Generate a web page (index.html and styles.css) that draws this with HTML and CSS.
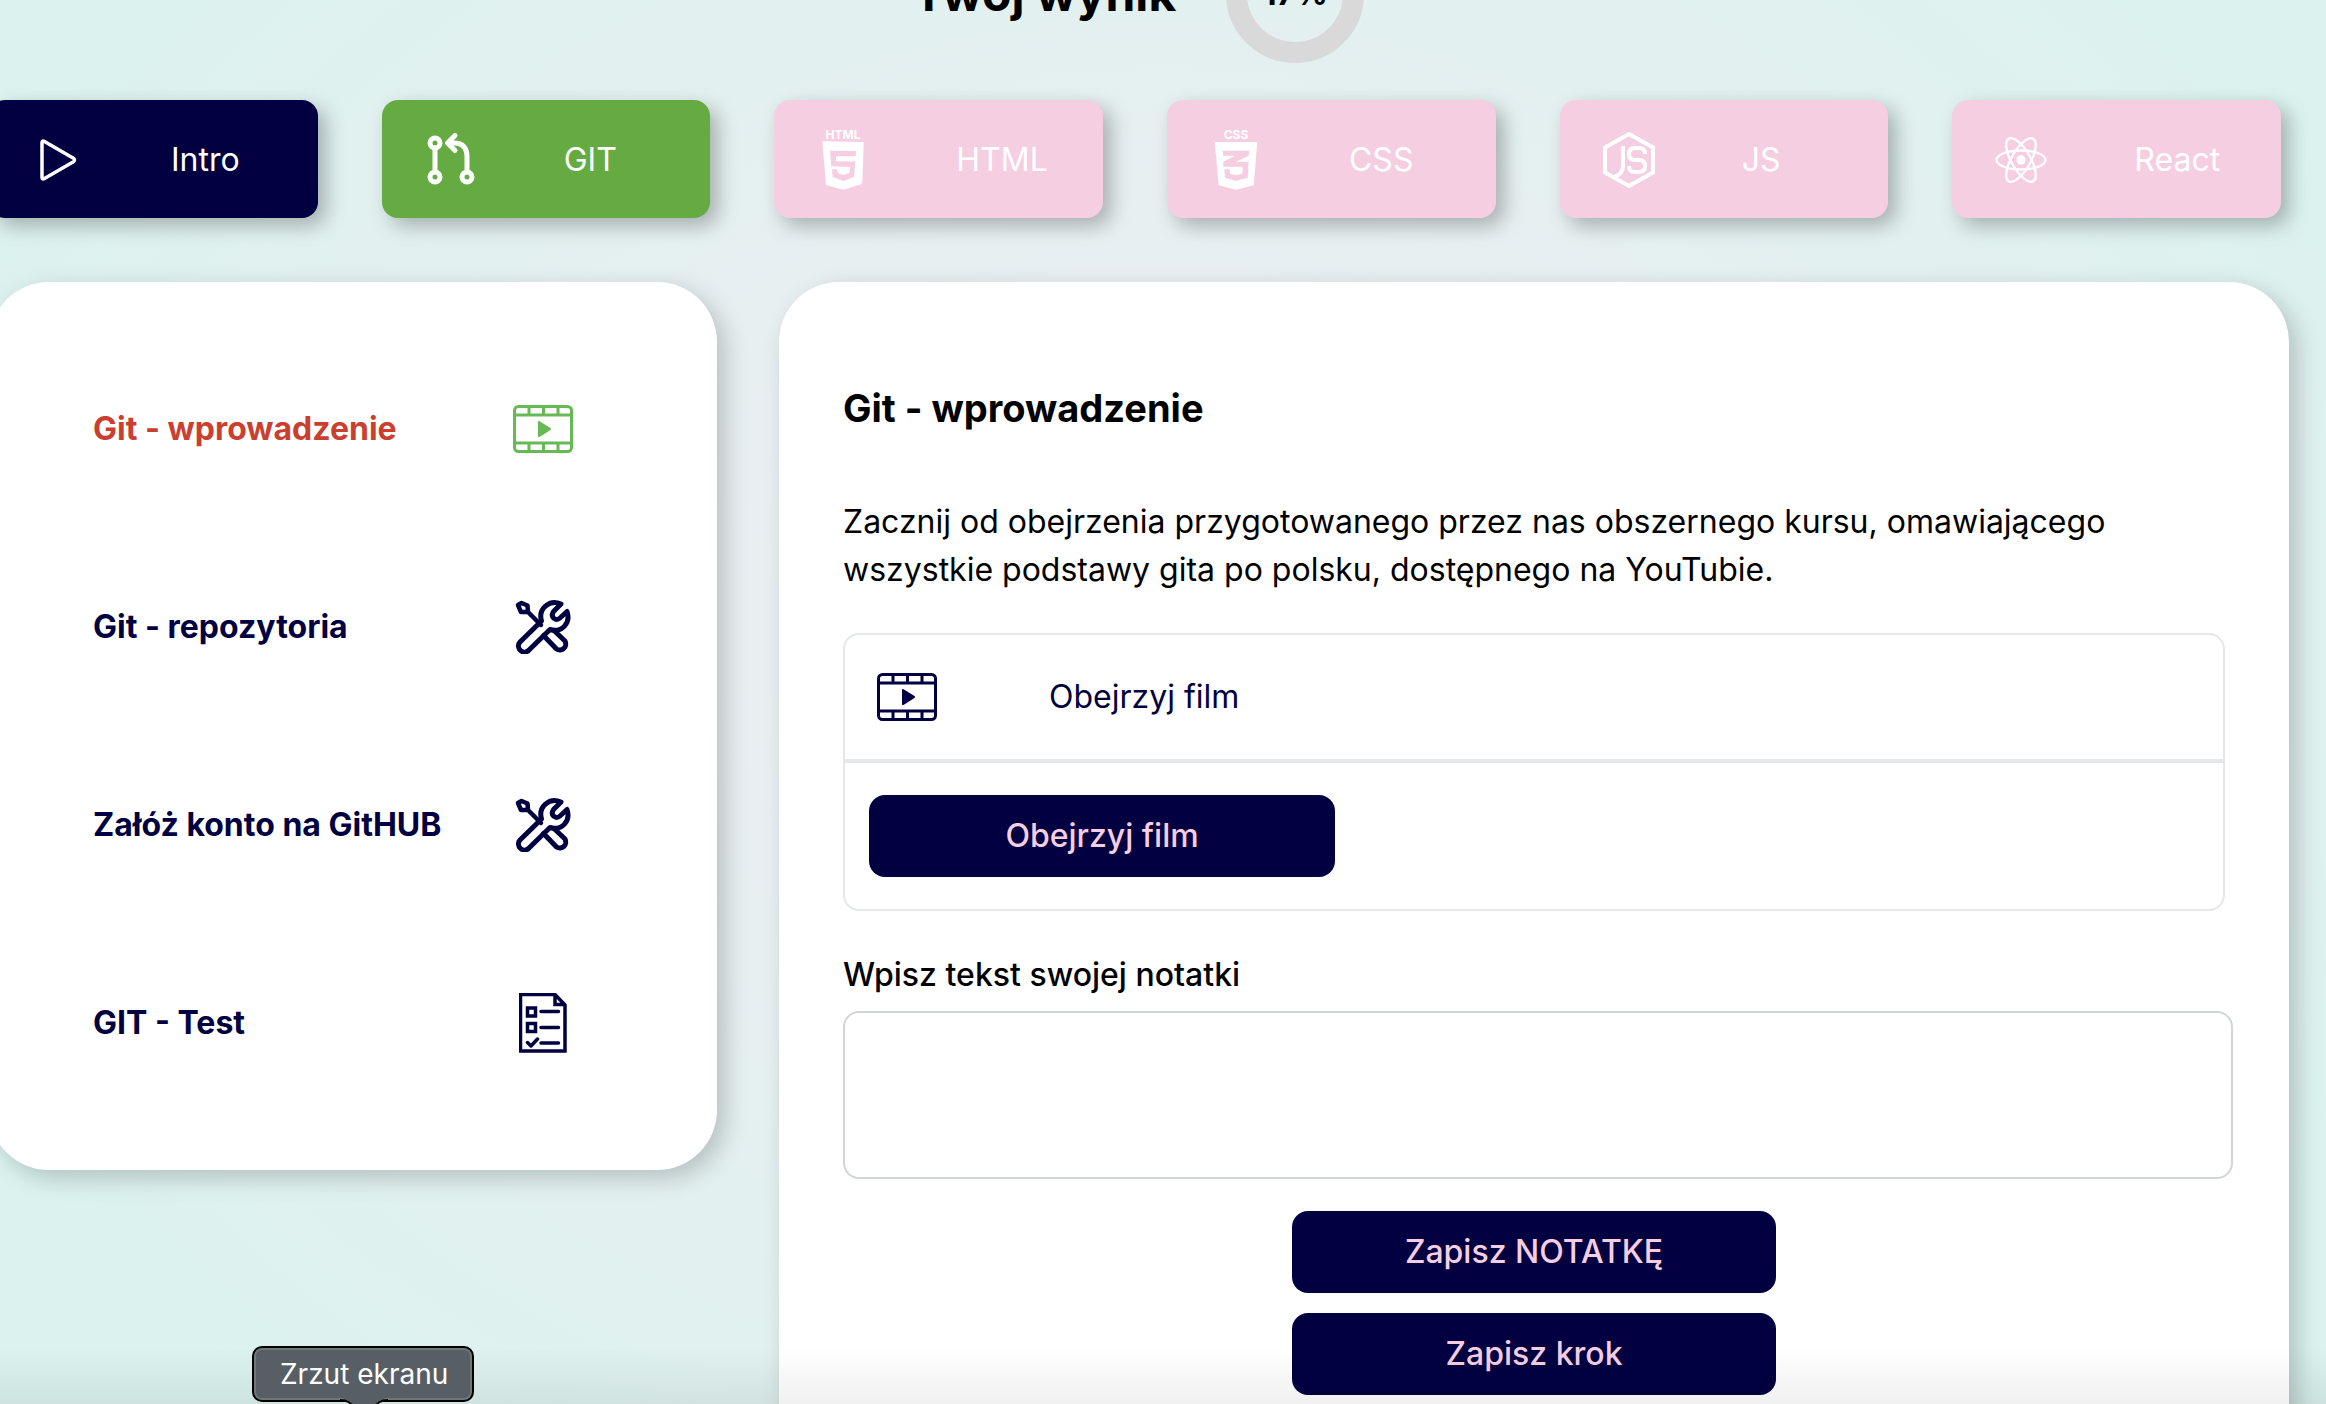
FILE: index.html
```html
<!DOCTYPE html>
<html lang="pl">
<head>
<meta charset="utf-8">
<title>Git - wprowadzenie</title>
<link rel="stylesheet" href="styles.css">
</head>
<body>
<svg class="sprite" aria-hidden="true">
  <symbol id="film" viewBox="0 0 60 48">
    <g fill="none" stroke="currentColor" stroke-width="3">
      <rect x="1.5" y="1.5" width="57" height="45" rx="4"/>
      <path d="M2 10H58M2 38H58M16 2V10M30.500 2V10M45 2V10M16 38V46M30.500 38V46M45 38V46"/>
    </g>
    <path d="M25 17Q25 15.500 26.500 16.200L37.500 23Q38.600 24 37.500 25L26.500 32Q25 32.600 25 31z" fill="currentColor"/>
  </symbol>
  <symbol id="tools" viewBox="0 0 56 54">
    <g fill="none" stroke="currentColor" stroke-width="5" stroke-linejoin="round" stroke-linecap="round">
      <path d="M3 5L6.500 3L12.500 5.500L13 12L6 12zM14 13L26 25" stroke-width="4.500"/>
      <path d="M5 42L26.500 21C23 9 34-1 46 4L38.500 11.500C35 17 40.500 22 45 18L52 11.500C56 23 47 33 35 29.500L14 50A6 6 0 0 1 5 42z"/>
      <path d="M28.500 35.500L41.500 49A6 6 0 0 0 50 41L39.500 31"/>
    </g>
  </symbol>
  <symbol id="checklist" viewBox="0 0 48 60">
    <g fill="none" stroke="currentColor" stroke-width="3.500">
      <path d="M1.500 1.500H36L46 12V58H1.500zM36 2V11.500H46M8.500 15h8v8h-8zM8.500 30.500h8v8h-8z"/>
      <path d="M22 18.500H39.500M22 34.500H39.500M22 50H39.500M8.500 49.500L12 53L18.500 46" stroke-linecap="round" stroke-linejoin="round"/>
    </g>
  </symbol>
</svg>

<div class="page">
  <header class="score">
    <h1 class="score-title">Twój wynik</h1>
    <div class="score-ring">17%</div>
  </header>

  <nav class="tabs">
    <button class="tab tab-dark" type="button">
      <svg class="tab-icon" viewBox="0 0 48 64"><path d="M8 14.500Q8 12 10.500 13.500L39 30Q42 32 39 34L10.500 50.500Q8 52 8 49.500z" fill="none" stroke="#fff" stroke-width="3.500" stroke-linejoin="round"/></svg>
      <span>Intro</span>
    </button>
    <button class="tab tab-green" type="button">
      <svg class="tab-icon" viewBox="0 0 48 64"><g fill="none" stroke="#fff" stroke-width="5" stroke-linecap="round" stroke-linejoin="round"><circle cx="8" cy="15" r="5"/><circle cx="8" cy="49" r="5"/><circle cx="40" cy="49" r="5"/><path d="M8 20V44M40 44V29Q40 15 27 15H21M28 7.500L20.500 15L28 22.500"/></g></svg>
      <span>GIT</span>
    </button>
    <button class="tab" type="button">
      <svg class="tab-icon" viewBox="0 0 48 64"><text class="logo-caption" x="24" y="11" text-anchor="middle">HTML</text><path fill="#fff" fill-rule="evenodd" d="M3.300 13.300L44.700 14L43.500 52Q43.200 55.500 42 56.200L24.300 61.700L7 57zM11 22.700L12.300 38.300L31 39L30.300 45L24.300 47L18.700 45L18 41.300L13 41.300L13.700 49L24.300 53L35 49L36.500 33.500L17 33.300L17 28.300L36.700 28.300L37 23z"/></svg>
      <span>HTML</span>
    </button>
    <button class="tab" type="button">
      <svg class="tab-icon" viewBox="0 0 48 64"><text class="logo-caption" x="24" y="11" text-anchor="middle">CSS</text><path fill="#fff" fill-rule="evenodd" d="M2.700 14H45.300L41.700 57.300L24 61.700L6.700 57.300zM10.700 22.700L11.300 27.700H23L11.300 33.700V38.700H30.700L30.300 45.700L24 47.300L18 45.700L17.700 41.300H12.300L13 49.700L24 53L35.700 49.700L36.700 33.700H24L36.700 27.700L37.300 22.700z"/></svg>
      <span>CSS</span>
    </button>
    <button class="tab" type="button">
      <svg class="tab-icon" viewBox="0 0 48 64"><g fill="none" stroke="#fff" stroke-width="4"><path d="M24 6L48 19.500V44.500L24 58L0 44.500V19.500z"/><path d="M18 18V38Q18 46 9 49"/><path d="M40 26C40 21 38 20 34 20H30C26 20 24 22 24 26S26 32 30 32H34C38 32 40 34 40 38S38 44 34 44H30C26 44 24 43 24 38"/></g></svg>
      <span>JS</span>
    </button>
    <button class="tab" type="button">
      <svg class="tab-icon" viewBox="0 0 48 64"><g fill="none" stroke="#fff" stroke-width="2.300"><ellipse cx="24" cy="32" rx="24.500" ry="9.500"/><ellipse cx="24" cy="32" rx="24.500" ry="9.500" transform="rotate(60 24 32)"/><ellipse cx="24" cy="32" rx="24.500" ry="9.500" transform="rotate(120 24 32)"/></g><circle cx="24" cy="32" r="4.700" fill="#fff"/></svg>
      <span>React</span>
    </button>
  </nav>

  <main class="columns">
    <aside class="panel steps">
      <a class="step step-active" href="#wprowadzenie"><span>Git - wprowadzenie</span><span class="step-icon"><svg width="60" height="48"><use href="#film"/></svg></span></a>
      <a class="step" href="#repozytoria"><span>Git - repozytoria</span><span class="step-icon"><svg width="56" height="54"><use href="#tools"/></svg></span></a>
      <a class="step" href="#konto"><span>Załóż konto na GitHUB</span><span class="step-icon"><svg width="56" height="54"><use href="#tools"/></svg></span></a>
      <a class="step" href="#test"><span>GIT - Test</span><span class="step-icon"><svg width="48" height="60"><use href="#checklist"/></svg></span></a>
    </aside>

    <section class="panel lesson">
      <h2 class="lesson-title">Git - wprowadzenie</h2>
      <p class="lesson-text">Zacznij od obejrzenia przygotowanego przez nas obszernego kursu, omawiającego wszystkie podstawy gita po polsku, dostępnego na YouTubie.</p>
      <div class="task">
        <div class="task-head"><svg width="60" height="48"><use href="#film"/></svg><span>Obejrzyj film</span></div>
        <div class="task-body"><button class="btn btn-watch" type="button">Obejrzyj film</button></div>
      </div>
      <form class="note">
        <label class="note-label" for="note">Wpisz tekst swojej notatki</label>
        <textarea class="note-input" id="note"></textarea>
        <button class="btn btn-save" type="button">Zapisz NOTATKĘ</button>
        <button class="btn btn-save" type="button">Zapisz krok</button>
      </form>
    </section>
  </main>
</div>

<div class="bottom-shade"></div>
<div class="tooltip" role="tooltip">Zrzut ekranu
  <svg class="tooltip-tail" viewBox="0 0 48 8"><path d="M4 0Q10 1 15 8H33Q38 1 44 0V-3H4z" fill="#575f65"/><path d="M0-1Q10-1 15 8M33 8Q38-1 48-1" fill="none" stroke="#000" stroke-width="2"/></svg>
</div>
</body>
</html>
```
FILE: styles.css
```css
* {
  box-sizing: border-box;
}

body {
  margin: 0;
  font-family: Inter, "Liberation Sans", sans-serif;
  font-size: 32px;
  line-height: 48px;
  color: #000;
}

button,
textarea {
  font: inherit;
}

.sprite {
  position: absolute;
  width: 0;
  height: 0;
}

.page {
  height: 100vh;
  overflow: hidden;
  padding-right: 37px;
  background: radial-gradient(ellipse 1340px 1040px at 50% 640px, #f0edf3, #dbf2ee);
}

/* Score */
.score {
  display: flex;
  align-items: center;
  justify-content: center;
  gap: 50px;
  margin: -75px 12px 37px 0;
}

.score-title {
  margin: 0;
  font-size: 48px;
  font-weight: 700;
}

.score-ring {
  display: flex;
  align-items: center;
  justify-content: center;
  width: 138px;
  height: 138px;
  border: 21px solid #d9d9d9;
  border-radius: 50%;
  font-size: 32px;
  font-weight: 700;
}

/* Tabs */
.tabs {
  display: grid;
  grid-template-columns: repeat(6, 1fr);
  gap: 64px;
  margin: 0 8px 64px -11px;
}

.tab {
  display: flex;
  align-items: center;
  gap: 89px;
  height: 118px;
  padding: 2px 0 0 45px;
  border: 0;
  border-radius: 16px;
  background: #f6cee1;
  color: #fff;
  box-shadow: 8px 8px 20px rgba(0, 0, 0, 0.27);
}

.tab-dark {
  background: #020041;
}

.tab-green {
  background: #65ab42;
}

.tab-icon {
  flex: none;
  width: 48px;
  height: 64px;
  overflow: visible;
}

.logo-caption {
  font-size: 12px;
  font-weight: 700;
  fill: #fff;
}

/* Panels */
.columns {
  display: grid;
  grid-template-columns: 728fr 1510fr;
  gap: 62px;
  align-items: start;
  margin-left: -11px;
}

.panel {
  border-radius: 60px;
  background: #fff;
  box-shadow: 8px 8px 24px rgba(0, 0, 0, 0.2);
}

.steps {
  padding: 48px 104px;
}

.step {
  display: flex;
  align-items: center;
  justify-content: space-between;
  height: 198px;
  color: #020041;
  font-weight: 700;
  text-decoration: none;
}

.step-active {
  color: #ca3f30;
}

.step-icon {
  display: flex;
  justify-content: center;
  width: 140px;
}

.step-active .step-icon {
  color: #66b955;
}

.lesson {
  padding: 102px 64px 160px;
}

.lesson-title {
  margin: 0 0 66px;
  font-size: 38px;
  font-weight: 700;
}

.lesson-text {
  margin: 0 0 39px;
}

.task {
  border: 2px solid #e5e7eb;
  border-radius: 16px;
}

.task-head {
  display: flex;
  align-items: center;
  gap: 112px;
  height: 128px;
  padding: 0 32px;
  border-bottom: 4px solid #e5e7eb;
  color: #020041;
}

.task-body {
  padding: 32px 24px;
}

.btn {
  display: block;
  height: 82px;
  border: 0;
  border-radius: 16px;
  background: #020041;
  color: #f6cee1;
  font-weight: 500;
}

.btn-watch {
  width: 466px;
}

.note {
  display: flex;
  flex-direction: column;
  align-items: center;
  margin-top: 40px;
}

.note-label {
  align-self: stretch;
  margin-bottom: 12px;
  font-weight: 500;
}

.note-input {
  align-self: flex-start;
  width: calc(100% + 8px);
  height: 168px;
  margin-bottom: 32px;
  padding: 16px;
  border: 2px solid #d1d5db;
  border-radius: 16px;
  background: #fff;
  resize: none;
}

.btn-save {
  width: 484px;
  margin-bottom: 20px;
}

/* Desktop overlay */
.bottom-shade {
  position: fixed;
  right: 0;
  bottom: 0;
  left: 0;
  height: 56px;
  background: linear-gradient(transparent, rgba(0, 0, 0, 0.06));
  pointer-events: none;
}

.tooltip {
  position: fixed;
  bottom: 2px;
  left: 252px;
  padding: 4px 24px 0 26px;
  height: 56px;
  border: 2px solid #000;
  border-radius: 10px;
  background: #575f65;
  box-shadow: inset 0 0 0 2px #6f777b;
  color: #fff;
  font-size: 28px;
  line-height: 44px;
}

.tooltip-tail {
  position: absolute;
  top: 53px;
  left: 86px;
  width: 48px;
  height: 8px;
  overflow: visible;
}
```
